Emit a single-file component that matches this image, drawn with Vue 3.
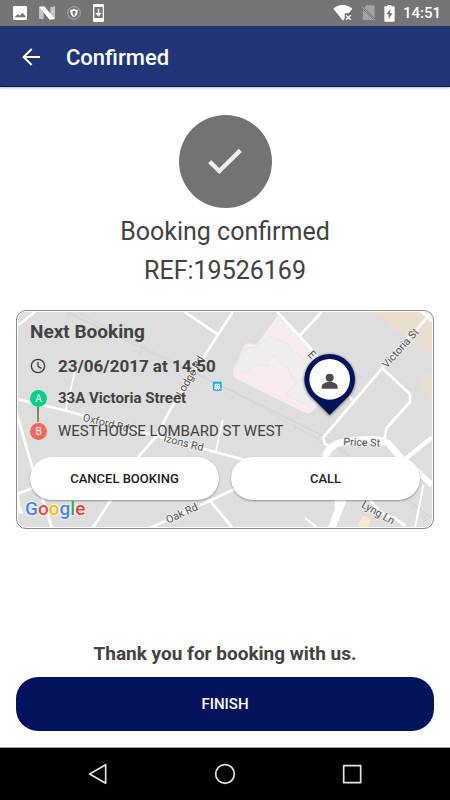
<script setup>
const reference = '19526169'
const booking = {
  when: '23/06/2017 at 14:50',
  pickup: '33A Victoria Street',
  dropoff: 'WESTHOUSE LOMBARD ST WEST'
}
</script>

<template>
  <div class="screen">
    <div class="status">
      <div class="status-group left">
        <svg width="14" height="14" viewBox="0 0 42 42">
          <path fill="#fff" fill-rule="evenodd" d="M4 0h34a4 4 0 0 1 4 4v34a4 4 0 0 1-4 4H4a4 4 0 0 1-4-4V4a4 4 0 0 1 4-4zM6 34h31V30l-9-10-7 9-6-5-9 8z" />
        </svg>
        <svg width="16" height="14" viewBox="0 0 48 42">
          <path fill="#c4c4c4" d="M0 2l14 12v26L0 38zM34 4l14-3v38L34 28z" />
          <path fill="#fff" d="M0 2l16-1 32 38-16 2z" />
        </svg>
        <svg width="14" height="14" viewBox="0 0 42 42">
          <circle cx="21" cy="21" r="19" fill="none" stroke="#c8c8c8" stroke-width="2" />
          <path fill="#fff" fill-rule="evenodd" d="M21 8c3 3 7 3 11 3 1 10-2 18-11 23C12 29 9 21 10 11c4 0 8 0 11-3zM21 14a5 5 0 0 0-3 9l1 6h4l1-6a5 5 0 0 0-3-9z" />
        </svg>
        <svg width="11" height="18" viewBox="0 0 33 54">
          <path fill="#fff" fill-rule="evenodd" d="M4 0h25a4 4 0 0 1 4 4v46a4 4 0 0 1-4 4H4a4 4 0 0 1-4-4V4a4 4 0 0 1 4-4zM4 9v33h25V9z" />
          <path fill="#fff" d="M14 14h5v13h7L16.500 38 7 27h7z" />
        </svg>
      </div>
      <div class="status-group right">
        <svg width="20" height="16" viewBox="0 0 60 48">
          <path fill="#fff" d="M1 11C18-4 41-4 58 11L47 25H35v15l-5 7z" />
          <path stroke="#fff" stroke-width="4" d="M39 31l14 13M53 31L39 44" />
        </svg>
        <svg width="15" height="16" viewBox="0 0 45 48">
          <path fill="#a3a3a3" d="M16 1h21a4 4 0 0 1 4 4v34L10 8zM6 14l32 31H9a4 4 0 0 1-4-4z" />
          <path stroke="#a3a3a3" stroke-width="3" d="M1 4l42 42" />
        </svg>
        <svg width="11" height="17" viewBox="0 0 33 51">
          <path fill="#fff" fill-rule="evenodd" d="M10 0h12v4h7a3 3 0 0 1 3 3v40a3 3 0 0 1-3 3H4a3 3 0 0 1-3-3V7a3 3 0 0 1 3-3h6zM19 12L7 28h7v13l12-16h-8z" />
        </svg>
        <span class="clock">14:51</span>
      </div>
    </div>

    <header class="bar">
      <button class="back" type="button" aria-label="Back">
        <svg width="18" height="18" viewBox="0 0 54 54" fill="none" stroke="#fff" stroke-width="6">
          <path d="M54 27H5M29 3L5 27l24 24" />
        </svg>
      </button>
      <h1>Confirmed</h1>
    </header>

    <main class="content">
      <div class="badge">
        <svg width="34" height="28" viewBox="0 0 102 84" fill="none" stroke="#efefef" stroke-width="13">
          <path d="M5 41l29 28L97 7" />
        </svg>
      </div>
      <p class="headline">Booking confirmed</p>
      <p class="headline">REF:{{ reference }}</p>

      <section class="card">
        <div class="card-inner">
          <svg class="map" viewBox="24 36 1242 645" preserveAspectRatio="xMidYMid slice">
            <rect width="1300" height="720" fill="#dedede" />
            <path fill="#eaded1" d="M1085 36H1266V166L1246 150 1235 126 1213 132zM1222 250L1266 212V306z" />
            <path fill="#f7ebef" d="M804 46L916 165 990 215 918 322Q900 348 885 338L682 238Q668 230 670 205L706 133Q712 126 738 135z" />
            <path fill="#eee" stroke="#e2e2e2" stroke-width="2" d="M674 200L705 146 738 141 778 108 838 135 845 155 862 157 894 196 930 230 940 262 905 306 885 314 828 282 848 262 862 246 846 234 835 206 805 182 797 166 772 182 776 200 742 192 708 220 680 209z" />
            <path fill="#f5e9ce" d="M1059 648l25 9-10 30-32-9z" />
            <g fill="none" stroke="#d3d3d3">
              <path stroke-width="4" d="M170 36L660 270 940 408 1266 655" />
              <path stroke-width="2" d="M200 36L670 276 980 448 1266 669" />
              <path stroke-width="3" d="M172 50l14-18M385 166l10-18M575 242l-8 16M670 282l-6 20M730 308l-6 20M860 370l-8 20M930 405l-8 20M1045 480l-8 18M1140 550l-10 18M1210 610l-8 18M1250 640l-8 18" />
            </g>
            <g fill="none" stroke="#fff" stroke-width="8" stroke-linejoin="round">
              <path d="M24 76L74 36M524 36L623 103M668 36L560 204 480 330 440 408 385 470 300 604 248 684" />
              <path d="M22 298L160 330 440 408 690 476 850 515" />
              <path stroke-width="5" d="M196 210L167 330M638 360L618 454" />
              <path d="M22 345L66 500 126 684M22 582L120 544M24 610L36 640M18 560L30 640" />
              <path d="M420 684L600 602 720 545M600 602L668 684" />
              <path d="M802 36L868 108 960 210 1026 300M868 108L935 36" />
              <path d="M1266 36L1116 205 940 412 945 432 963 440M1116 205L1200 282 1200 306 1130 384 1122 420" />
              <path stroke-width="20" d="M945 490Q942 434 1010 424Q1100 410 1135 430L1185 488" />
              <path stroke-width="13" d="M1120 530L1266 412" />
              <path stroke-width="18" d="M1185 480L1266 555" />
              <path stroke-width="22" d="M985 560L985 630 965 684" />
              <path stroke-width="12" d="M1020 560L970 684M1228 26L1266 62" />
              <path stroke-width="6" d="M1240 555L1215 684M885 654L922 684" />
              <path stroke-width="9" d="M1080 600Q1110 645 1155 655L1186 678" />
            </g>
            <g class="labels">
              <text transform="translate(516 292) rotate(-60)">Lodge Rd</text>
              <text transform="translate(217 362) rotate(14)">Oxford Rd</text>
              <text transform="translate(459 424) rotate(14)">Izons Rd</text>
              <text transform="translate(474 671) rotate(-25)">Oak Rd</text>
              <text transform="translate(1052 620) rotate(30)">Lyng Ln</text>
              <text transform="translate(1000 436) rotate(2)">Price St</text>
              <text transform="translate(1130 206) rotate(-48)">Victoria St</text>
              <text transform="translate(892 164) rotate(47)">E</text>
            </g>
            <rect x="609" y="245" width="26" height="27" fill="#19a7f5" />
            <path fill="#fff" fill-rule="evenodd" d="M614 251h16v13h2v3h-5v3h-3v-3h-4v3h-3v-3h-5v-3h2zM617 254v3h4v-3zM624 254v3h4v-3zM617 260v3h3v-3zM625 260v3h3v-3z" />
            <path class="pin" fill="#04145c" d="M959 345L901 287A76 76 0 1 1 1017 287z" />
            <circle cx="959" cy="238" r="61" fill="#fff" />
            <g fill="#4d4d4d">
              <circle cx="959" cy="233" r="12" />
              <path d="M935 266v-6c0-10 15-15 24-15s24 5 24 15v6z" />
            </g>
          </svg>

          <div class="google" aria-label="Google">
            <span class="blue">G</span><span class="red">o</span><span class="yellow">o</span><span class="blue">g</span><span class="green">l</span><span class="red">e</span>
          </div>

          <div class="details">
            <h2>Next Booking</h2>
            <div class="row when">
              <svg width="16" height="16" viewBox="0 0 48 48" fill="none" stroke="#3c3c3c" stroke-width="4">
                <circle cx="24" cy="24" r="20" />
                <path d="M24 12v13l10 6" />
              </svg>
              <span>{{ booking.when }}</span>
            </div>
            <div class="row pickup">
              <span class="stop a">A</span>
              <span>{{ booking.pickup }}</span>
            </div>
            <div class="link"></div>
            <div class="row dropoff">
              <span class="stop b">B</span>
              <span>{{ booking.dropoff }}</span>
            </div>
            <div class="actions">
              <button type="button">CANCEL BOOKING</button>
              <button type="button">CALL</button>
            </div>
          </div>
        </div>
      </section>

      <p class="thanks">Thank you for booking with us.</p>
      <button class="finish" type="button">FINISH</button>
    </main>

    <nav class="nav">
      <button type="button" aria-label="Back">
        <svg width="20" height="22" viewBox="0 0 60 66" fill="none" stroke="#e6e6e6" stroke-width="5" stroke-linejoin="round">
          <path d="M53 5v56L5 33z" />
        </svg>
      </button>
      <button type="button" aria-label="Home">
        <svg width="22" height="22" viewBox="0 0 66 66" fill="none" stroke="#e6e6e6" stroke-width="5">
          <circle cx="33" cy="33" r="28" />
        </svg>
      </button>
      <button type="button" aria-label="Overview">
        <svg width="20" height="20" viewBox="0 0 60 60" fill="none" stroke="#e6e6e6" stroke-width="5" stroke-linejoin="round">
          <rect x="5" y="5" width="51" height="51" />
        </svg>
      </button>
    </nav>
  </div>
</template>

<style>
body {
  margin: 0;
  background: #fff;
}
</style>

<style scoped>
.screen {
  display: flex;
  flex-direction: column;
  min-height: 100vh;
  font-family: Roboto, "Liberation Sans", sans-serif;
  color: #424242;
  background: #fff;
}

button {
  margin: 0;
  padding: 0;
  border: 0;
  background: none;
  font-family: inherit;
  cursor: pointer;
}

svg {
  display: block;
}

.status {
  display: flex;
  align-items: center;
  justify-content: space-between;
  height: 26px;
  padding: 0 9px 0 13px;
  background: #757575;
}

.status-group {
  display: flex;
  align-items: center;
}

.left {
  gap: 12px;
}

.right {
  gap: 8px;
}

.clock {
  color: #fff;
  font-size: 15px;
  font-weight: 500;
  line-height: 26px;
}

.bar {
  display: flex;
  align-items: center;
  gap: 26px;
  box-sizing: border-box;
  height: 61px;
  padding: 2px 22px 0;
  background: #213477;
  border-bottom: 1px solid #04186c;
  box-shadow: 0 1px 2px rgba(0, 0, 0, 0.3);
}

.bar h1 {
  margin: 0;
  color: #fff;
  font-size: 22px;
  font-weight: 500;
}

.content {
  flex: 1;
  display: flex;
  flex-direction: column;
  padding: 28px 16px 16px;
}

.badge {
  display: flex;
  align-items: center;
  justify-content: center;
  align-self: center;
  width: 93px;
  height: 93px;
  margin-bottom: 4px;
  border-radius: 50%;
  background: #737373;
}

.headline {
  margin: 0;
  font-size: 25px;
  line-height: 39px;
  text-align: center;
}

.card {
  margin-top: 20px;
  padding: 1px;
  border: 1px solid #8a8a8a;
  border-radius: 10px;
  background: #fff;
}

.card-inner {
  position: relative;
  overflow: hidden;
  border-radius: 8px;
}

.map {
  position: absolute;
  inset: 0;
  width: 100%;
  height: 100%;
}

.labels {
  fill: #555;
  stroke: #eee;
  stroke-width: 6px;
  stroke-linejoin: round;
  paint-order: stroke;
  font-size: 32px;
}

.pin {
  filter: drop-shadow(0 2px 5px rgba(0, 0, 0, 0.6));
}

.google {
  position: absolute;
  left: 7px;
  bottom: 6px;
  display: flex;
  font-size: 19px;
  font-weight: 500;
  line-height: 24px;
  text-shadow: 0 0 2px #fff, 0 0 2px #fff, 0 0 2px #fff;
}

.blue { color: #4285f4; }
.red { color: #ea4335; }
.yellow { color: #fbbc05; }
.green { color: #34a853; }

.details {
  position: relative;
  padding: 8px 12px 27px;
}

.details h2 {
  margin: 0;
  font-size: 19px;
  font-weight: 700;
  line-height: 24px;
}

.row {
  display: flex;
  align-items: center;
  gap: 11px;
}

.when {
  gap: 12px;
  margin-top: 10px;
  font-size: 17px;
  font-weight: 700;
  line-height: 24px;
}

.pickup {
  margin-top: 11px;
  font-size: 15px;
  font-weight: 700;
  line-height: 18px;
}

.link {
  width: 2px;
  height: 15px;
  margin-left: 7px;
  background: linear-gradient(#4c9f4e, #d9734e);
}

.dropoff {
  font-size: 15px;
  line-height: 18px;
}

.stop {
  width: 17px;
  height: 17px;
  border-radius: 50%;
  color: #fff;
  font-size: 10px;
  font-weight: 400;
  line-height: 17px;
  text-align: center;
}

.a { background: #0bd081; }
.b { background: #f4675c; }

.actions {
  display: grid;
  grid-template-columns: 1fr 1fr;
  gap: 12px;
  margin-top: 17px;
}

.actions button {
  height: 43px;
  border-radius: 22px;
  background: #fff;
  color: #1c1c1c;
  font-size: 13px;
  font-weight: 500;
  box-shadow: 0 1px 2px rgba(0, 0, 0, 0.35);
}

.thanks {
  margin: auto 0 11px;
  font-size: 19px;
  font-weight: 700;
  line-height: 24px;
  text-align: center;
}

.finish {
  height: 54px;
  border-radius: 22px;
  background: #04145c;
  color: #fff;
  font-size: 15px;
  font-weight: 500;
}

.nav {
  display: grid;
  grid-template-columns: repeat(3, 1fr);
  height: 52px;
  padding: 0 35px;
  border-top: 1px solid #9aa09c;
  background: #000;
}

.nav button {
  display: flex;
  align-items: center;
  justify-content: center;
}
</style>
